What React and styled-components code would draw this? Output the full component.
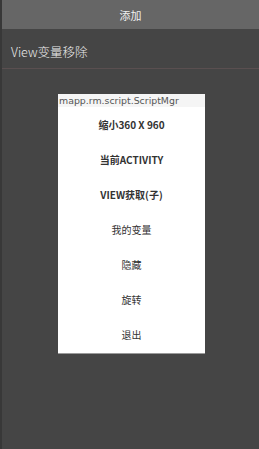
import React from "react";
import styled, { createGlobalStyle } from "styled-components";

const Global = createGlobalStyle`
  html, body { margin: 0; padding: 0; background: #454545; }
  #root { width: 259px; height: 449px; }
`;

const Screen = styled.div`
  width: 259px;
  height: 449px;
  background: #454545;
  border-left: 2px solid #383838;
  box-sizing: border-box;
  display: flex;
  flex-direction: column;
  font-family: "Noto Sans CJK SC", "Liberation Sans", sans-serif;
`;

const TopBar = styled.div`
  height: 29px;
  flex-shrink: 0;
  background: #666666;
  color: #f0f0f0;
  font-size: 11px;
  display: flex;
  align-items: center;
  justify-content: center;
`;

const Row = styled.div`
  height: 40px;
  flex-shrink: 0;
  box-sizing: border-box;
  padding: 6px 0 0 9px;
  border-bottom: 1px solid #5a4f50;
  display: flex;
  align-items: center;
  color: #ececec;
  font-size: 12.5px;
  font-weight: 300;
`;

const Stage = styled.div`
  flex: 1;
  display: flex;
  justify-content: center;
  align-items: flex-start;
  padding-top: 25px;
  padding-left: 2px;
`;

const Dialog = styled.div`
  width: 147px;
  height: 260px;
  background: #ffffff;
  border-bottom: 1px solid #9a9a9a;
  box-sizing: border-box;
  display: flex;
  flex-direction: column;
`;

const DialogHead = styled.div`
  height: 13px;
  flex-shrink: 0;
  background: #f5f5f5;
  color: #555;
  font-family: "DejaVu Sans", sans-serif;
  font-size: 9.4px;
  line-height: 13px;
  padding-left: 1px;
  white-space: nowrap;
  overflow: hidden;
`;

const Item = styled.div`
  height: 35px;
  display: flex;
  align-items: center;
  justify-content: center;
  color: #333;
  font-size: 10px;
  font-weight: ${(p) => (p.$bold ? 700 : 400)};
`;

const items = [
  ["缩小360 X 960", true],
  ["当前ACTIVITY", true],
  ["VIEW获取(子)", true],
  ["我的变量", false],
  ["隐藏", false],
  ["旋转", false],
  ["退出", false],
];

export default function App() {
  return (
    <>
      <Global />
      <Screen>
        <TopBar>添加</TopBar>
        <Row>View变量移除</Row>
        <Stage>
          <Dialog>
            <DialogHead>mapp.rm.script.ScriptMgr</DialogHead>
            {items.map(([t, b]) => (
              <Item key={t} $bold={b}>{t}</Item>
            ))}
          </Dialog>
        </Stage>
      </Screen>
    </>
  );
}
